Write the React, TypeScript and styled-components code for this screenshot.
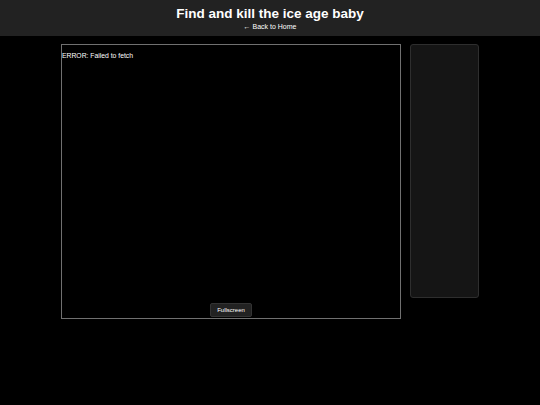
import React from 'react';
import styled, { createGlobalStyle } from 'styled-components';

const GlobalStyle = createGlobalStyle`
  html, body {
    margin: 0;
    padding: 0;
    background: #000;
    color: #fff;
    font-family: "Liberation Sans", Arial, sans-serif;
  }
`;

export default function App() {
  return (
    <>
      <GlobalStyle />
      <Header>
        <Title>Find and kill the ice age baby</Title>
        <BackLink href="#">← Back to Home</BackLink>
      </Header>
      <Main>
        <GameFrame>
          <ErrorText>ERROR: Failed to fetch</ErrorText>
          <FullscreenButton>Fullscreen</FullscreenButton>
        </GameFrame>
        <Sidebar />
      </Main>
    </>
  );
}

const Header = styled.header`
  background-color: #222;
  height: 36px;
  display: flex;
  flex-direction: column;
  align-items: center;
  padding-top: 6px;
  box-sizing: border-box;
`;

const Title = styled.h1`
  font-size: 13.5px;
  font-weight: bold;
  line-height: 16px;
  margin: 0;
`;

const BackLink = styled.a`
  color: #fff;
  font-size: 7px;
  line-height: 9px;
  text-decoration: none;
`;

const Main = styled.main`
  display: flex;
  justify-content: center;
  align-items: flex-start;
  gap: 9px;
  padding-top: 8px;
`;

const GameFrame = styled.div`
  position: relative;
  width: 340px;
  height: 275px;
  border: 1.5px solid #707070;
  box-sizing: border-box;
`;

const ErrorText = styled.div`
  font-size: 6.8px;
  line-height: 9px;
  padding-top: 6px;
`;

const FullscreenButton = styled.button`
  position: absolute;
  left: 50%;
  bottom: 1px;
  transform: translateX(-50%);
  width: 42px;
  height: 14px;
  padding: 0;
  background: #222;
  color: #fff;
  border: 1px solid #333;
  border-radius: 2px;
  font-family: "Liberation Sans", Arial, sans-serif;
  font-size: 6px;
`;

const Sidebar = styled.aside`
  width: 69px;
  height: 254px;
  background: #151515;
  border: 1px solid #2e2e2e;
  border-radius: 3px;
  box-sizing: border-box;
`;
